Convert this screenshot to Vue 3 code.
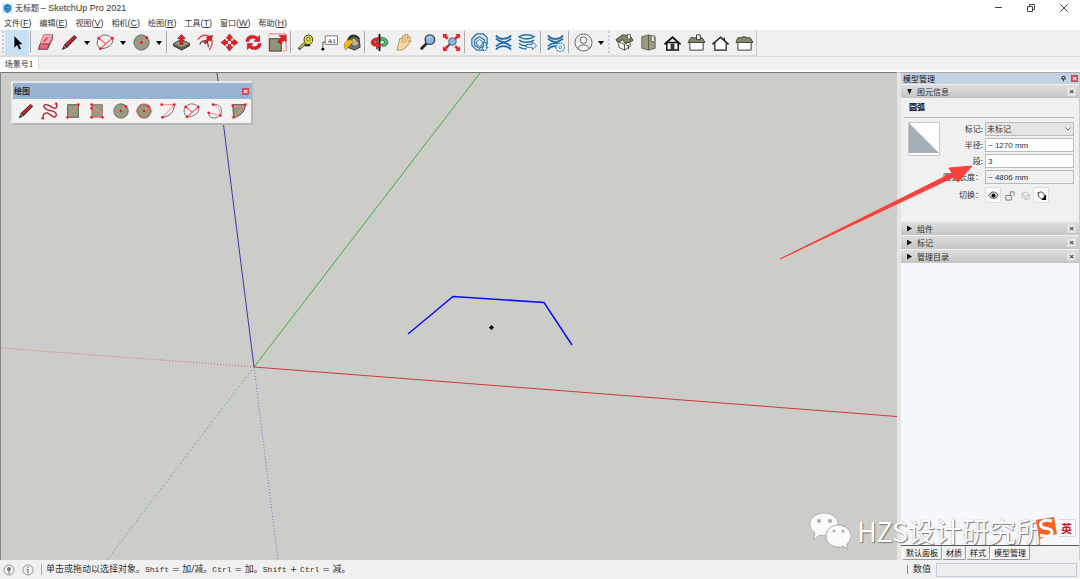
<script setup>
import { ref } from 'vue'

const menus = [
  ['文件', 'F'], ['编辑', 'E'], ['视图', 'V'], ['相机', 'C'],
  ['绘图', 'R'], ['工具', 'T'], ['窗口', 'W'], ['帮助', 'H'],
]

const dots = (...pts) => pts.map(([x, y]) => `<circle cx="${x}" cy="${y}" r="1.5" fill="#f01822"/>`).join('')
const pencil = '<path d="M2 18l2.500-6L15 2.200l3 2.600L7.500 15.500z" fill="#323232"/><path d="M5.500 12L15.500 2.800l1.500 1.500L7.500 14z" fill="#d3202a"/><path d="M2 18l2.500-5.500 2.500 2.600z" fill="#4c3a2c"/><path d="M4 13.500l2.500 2" stroke="#d9c4a0"/>'
const waves = '<path d="M2 2.500c4 5 12 5 16 0M2 6c5 4.500 11 4.500 16 0M2 14c5-4.500 11-4.500 16 0M2 17.500c4-5 12-5 16 0" fill="none" stroke="#1d6cab" stroke-width="1.900"/>'

const icons = {
  select: '<path d="M6.500 3v13l3-3 2.200 4.500 2.300-1-2.200-4.300h4z" fill="#000" stroke="#fff" stroke-width=".4"/>',
  eraser: '<path d="M8 2h9.500L12 17H2.500z" fill="#ee7f91" stroke="#7c4852"/><path d="M8 2h9.500l-3.800 9H4.500z" fill="#f7a5b1"/><path d="M2.500 17l2-5.500h9.300L12 17z" fill="#e76b80" stroke="#7c4852"/><path d="M17.500 2v4.500L12 17" fill="none" stroke="#7c4852"/><path d="M8 9l4-4" stroke="#d7586c" stroke-width="2"/>',
  pencil,
  arc: '<path d="M3 5.500C6 1 13 1 17 5.500M3 5.500C0 9 1 14 4.500 16.500M17 5.500C20 11 12 17 4.500 16.500" fill="none" stroke="#666"/><path d="M3 5.500l7 5.500M4.500 16.500L17 5.500" fill="none" stroke="#ff5f67" stroke-width="1.300"/>' + dots([3, 5.5], [17, 5.5], [4.5, 16.5]),
  circle: '<circle cx="10" cy="10" r="8" fill="#9b9a83" stroke="#65645a"/><path d="M10 10l5.500-5" stroke="#ff8b88"/>' + dots([10, 10], [15.5, 5]),
  push: '<path d="M1.500 11L10 7l8.500 4v2.500L10 18l-8.500-4.500z" fill="#5d5c4e" stroke="#393932"/><path d="M2 11l8-3.500 8 3.500-8 4z" fill="#99987d"/><path d="M10 1.500L6 6h2.500v6h3V6H14z" fill="#ef1d26" stroke="#7e1519" stroke-width=".7"/>',
  offset: '<path d="M2 7C6 1 15 0 17 9c.5 4-2 7-3 9" fill="none" stroke="#f13d43" stroke-width="1.400"/><path d="M4 12c2-5 9-6 9 3" fill="none" stroke="#454545" stroke-width="1.300"/><path d="M8 10l4-4-1-1.500 6.500-2-2 6-1.500-1-4 4z" fill="#e91b24" stroke="#70171a" stroke-width=".6"/>',
  move: '<g fill="#ee1d25" stroke="#7d1619" stroke-width=".6"><path d="M10 1L6.500 5.500h2V8h3V5.500h2zM10 19l-3.500-4.500h2V12h3v2.500h2zM1 10l4.500-3.500v2H8v3H5.500v2zM19 10l-4.500-3.500v2H12v3h2.500v2z"/></g>',
  rotate: '<g fill="#e91d25" stroke="#861619" stroke-width=".5"><path d="M2 9C2 2 10 1 14.500 4.500l2-2V9h-6l2-2.500C9 4.500 5.500 6 5 9zM18 11c0 7-8 8-12.500 4.500l-2 2V11h6l-2 2.500c3.500 2 7 .5 7.500-2.500z"/></g>',
  scale: '<path d="M1 1h18v18" fill="none" stroke="#ff6970"/><path d="M1 1v18h18" fill="none" stroke="#f2a5a8"/><path d="M1.500 6H14v13H1.500z" fill="#94937c" stroke="#43433b"/><path d="M10 9l4-4-2.500-2.500H19V9l-2-1.500-4 4z" fill="#ed1c24" stroke="#77171b" stroke-width=".6"/>',
  tape: '<path d="M9 11L3 17" stroke="#333" stroke-width="3"/><path d="M9 11L4 16" stroke="#e4d43a" stroke-width="1.500"/><ellipse cx="13" cy="7" rx="5" ry="5.500" fill="#3c3b30"/><ellipse cx="13" cy="7" rx="4" ry="4.500" fill="#eddd27"/><circle cx="13" cy="6.500" r="2" fill="#d7d7d2" stroke="#746d29"/><path d="M9 13h6" stroke="#26251e" stroke-width="2"/>',
  text: '<path d="M5.500 3h13v9h-13z" fill="#fff" stroke="#777"/><path d="M3 17V9.500h2.500" fill="none" stroke="#555"/><circle cx="3" cy="17" r="1.500"/><text x="8" y="10" font-size="7" font-family="Liberation Serif,serif">A1</text>',
  paint: '<path d="M5 8c0-7 10-8 12-2l1 9-6 3-7-3z" fill="#77715c" stroke="#303027"/><path d="M6 7c2-5 9-4 11-1" fill="none" stroke="#272721" stroke-width="1.500"/><path d="M6 8l6-3 5 6-5 5z" fill="#b9b39a" stroke="#49483d"/><path d="M8 7c-9 1-7 9-5 11 3-2 3-6 8-8z" fill="#efb628" stroke="#98711b" stroke-width=".6"/><path d="M11 12l5 3-4 2z" fill="#3c82aa"/>',
  orbit: '<path d="M10 1v18" stroke="#111" stroke-width="2"/><path d="M9 5C-1 5-1 14 7 14v3l5-4-5-4.500v2.500c-4-1-2-3 2-3z" fill="#e8222b" stroke="#791d20" stroke-width=".7"/><path d="M11 4.500c9 0 10 7 5 9.500l-3 0-1-2.500c4 0 5-3-1-4z" fill="#4fb36f" stroke="#255c38" stroke-width=".7"/>',
  hand: '<path d="M3 18l2-7 1-5 3-1v-2l3-1 1-1 2 1-1 3 3-1 1 1-3 4 3-1-1 2-4 5-5 3z" fill="#f4d7a0" stroke="#a18358" stroke-width=".8"/><path d="M9 5l-1 5M12 3l-2 7M15 5l-4 6" fill="none" stroke="#b69565" stroke-width=".7"/>',
  zoom: '<path d="M9 11l-6 6" stroke="#282828" stroke-width="3"/><circle cx="12.500" cy="7" r="5" fill="#8fb8dc" stroke="#3e444b" stroke-width="1.500"/><path d="M10 6c1-2 3-2 4-2" stroke="#d4e9fa" fill="none"/>',
  extents: '<path d="M10 10l-7 7" stroke="#444" stroke-width="2"/><circle cx="11" cy="9" r="4" fill="#8fb9da" stroke="#4c5962"/><path d="M1 1h5L4.500 2.500 7 5 5 7 2.500 4.500 1 6zM19 1v5l-1.500-1.500L15 7l-2-2 2.500-2.500L14 1zM1 19v-5l1.500 1.500L5 13l2 2-2.500 2.500L6 19zM19 19h-5l1.500-1.500L13 15l2-2 2.500 2.500L19 14z" fill="#ef1d27"/>',
  warehouse: '<path d="M7 1h7l4 4v7l-4 6H7l-5-5V6z" fill="none" stroke="#216ea8" stroke-width="1.300"/><path d="M10 4l5 3v6l-5 3-5-3V7z" fill="none" stroke="#216ea8" stroke-width="1.300"/><path d="M10 7l3 2v3l-3 2-3-2V9z" fill="none" stroke="#216ea8"/><path d="M14 10h3v5h2l-3.500 4-3.500-4h2z" fill="#f5f9fb" stroke="#216ea8"/>',
  waves,
  layers: '<path d="M1 4c4-3 12-3 16 0-4 3-12 3-16 0zM1 7.500c4 3 12 3 16 0M1 11c4 3 9 3 12 1M1 14.500c3 2 6 2.500 8 2" fill="none" stroke="#216ea8" stroke-width="1.500"/><path d="M9 12h6V9.500l4.500 4-4.500 4V15H9z" fill="#fff" stroke="#216ea8"/>',
  gear: waves + '<circle cx="15" cy="15" r="4.500" fill="#f4f4f4" stroke="#4d8dbb" stroke-width="1.400" stroke-dasharray="2 1"/><circle cx="15" cy="15" r="1.500" fill="none" stroke="#4d8dbb"/>',
  user: '<circle cx="10" cy="10" r="9" fill="none" stroke="#5d6063"/><circle cx="10" cy="7.500" r="3.500" fill="none" stroke="#5d6063"/><path d="M4 17c0-6 12-6 12 0" fill="none" stroke="#5d6063"/>',
  iso: '<path d="M4 9l6 3v6l-6-3zM10 12l6-4v6l-6 4z" fill="#f8f8f5" stroke="#55554b"/><path d="M1 7l7-5 8 1 3 5-8 3-3-4-5 3z" fill="#85846d" stroke="#383830"/><path d="M13 1.500h3v5h-3z" fill="#fff" stroke="#555"/><path d="M12 13h2v4" fill="none" stroke="#333"/>',
  top: '<path d="M3 4l7-2 7 2v12l-7 2-7-2z" fill="#9c9b80" stroke="#626154"/><path d="M10 2v16" stroke="#5c5b4f"/><path d="M13 3h3v6h-3z" fill="#fff" stroke="#666"/>',
  front: '<path d="M4 10h12v8H4z" fill="#fff" stroke="#111" stroke-width="1.600"/><path d="M1.500 12L10 4.500 18.500 12" fill="none" stroke="#111" stroke-width="2"/><path d="M8 11h4v7H8z" fill="#333"/>',
  right: '<path d="M3 10h14v8H3z" fill="#fff" stroke="#333"/><path d="M4 5h12l3 5H1z" fill="#89876e" stroke="#44433a"/><path d="M10 2h4v5h-4z" fill="#fff" stroke="#333"/>',
  back: '<path d="M4 10v8h12v-8" fill="#fff" stroke="#222" stroke-width="1.300"/><path d="M1.500 12L10 4.500 18.500 12M14 5v3" fill="none" stroke="#222" stroke-width="1.500"/>',
  left: '<path d="M3 10h14v8H3z" fill="#fff" stroke="#333"/><path d="M3 5h5V4h3v1h5l3 5H1z" fill="#89876e" stroke="#44433a"/>',
  freehand: '<path d="M2 18c0-7 5-7 8-4s7 4 7 0-5-4-9-5-7-5-3-6 7 4 10 4 3-3 2-5" fill="none" stroke="#b01d2a" stroke-width="1.500"/>' + dots([2, 18], [17, 2]),
  rect: '<path d="M4 3h12v14H4z" fill="#99987f" stroke="#55554b"/><path d="M4 17L16 3" stroke="#ff8c8b"/>' + dots([4, 17], [16, 3]),
  rotrect: '<path d="M4 3h12v14H4z" fill="#99987f" stroke="#77766a"/><path d="M4 3v14h12M4 7c6 0 12 4 12 10" fill="none" stroke="#ff8a8a"/>' + dots([4, 3], [4, 17], [16, 17], [4, 7]),
  polygon: '<path d="M6 3h8l4 7-4 7H6l-4-7z" fill="#99987f" stroke="#55554b"/><circle cx="10" cy="10" r="8" fill="none" stroke="#f2696c"/><path d="M10 10l5-5" stroke="#ffaaa8"/>' + dots([10, 10], [15, 5]),
  arccenter: '<path d="M17 3c0 8-5 13-13 14" fill="none" stroke="#555"/><path d="M3 3h14L4 17" fill="none" stroke="#ff7078"/>' + dots([3, 3], [17, 3], [4, 17]),
  arc3: '<path d="M8 3c8-2 12 7 7 12S3 18 3 12" fill="none" stroke="#666"/><path d="M8 3c5 2 8 6 8 12L3 12" fill="none" stroke="#ff7a80"/>' + dots([8, 3], [16, 15], [3, 12]),
  pie: '<path d="M3 3h14c0 8-6 13-13 14z" fill="#99987f" stroke="#4d4d43"/><path d="M3 5h13L4 17" fill="none" stroke="#ff898b"/>' + dots([3, 4], [17, 3], [4, 17]),
}

const groups = [
  [['select', '选择']],
  [['eraser', '擦除'], ['pencil', '直线', 1], ['arc', '圆弧', 1], ['circle', '圆', 1]],
  [['push', '推拉'], ['offset', '偏移'], ['move', '移动'], ['rotate', '旋转'], ['scale', '缩放']],
  [['tape', '卷尺'], ['text', '文字'], ['paint', '材质']],
  [['orbit', '环绕观察'], ['hand', '平移'], ['zoom', '缩放视图'], ['extents', '充满视窗']],
  [['warehouse', '模型库'], ['waves', '扩展程序库'], ['layers', '布局']],
  [['gear', '扩展程序管理']],
  [['user', '账户', 1]],
  [['iso', '等轴'], ['top', '俯视'], ['front', '前视'], ['right', '右视'], ['back', '后视'], ['left', '左视']],
]

const drawTools = [
  ['pencil', '直线'], ['freehand', '手绘线'], ['rect', '矩形'], ['rotrect', '旋转矩形'], ['circle', '圆'],
  ['polygon', '多边形'], ['arccenter', '中心圆弧'], ['arc', '两点圆弧'], ['arc3', '三点圆弧'], ['pie', '扇形'],
]

const trays = ['组件', '标记', '管理目录']
const trayTabs = ['默认面板', '材质', '样式', '模型管理']
const radius = ref('~ 1270 mm')
const segments = ref('3')
const arcLength = ref('~ 4806 mm')
</script>

<template>
  <div class="app">
    <header class="titlebar">
      <svg class="logo" viewBox="0 0 12 12"><rect width="12" height="12" fill="#d8ecf8" /><path d="M6 1l4 2v5l-4 3-4-3V3z" fill="#1d76ae" /><path d="M3 4l3 1 3-1M3 7l3 1 3-1" fill="none" stroke="#74b7db" /></svg>
      <h1>无标题 <span class="latin">– SketchUp Pro 2021</span></h1>
      <div class="win">
        <button aria-label="最小化"><svg viewBox="0 0 10 10"><path d="M2 4.500h7" /></svg></button>
        <button aria-label="还原"><svg viewBox="0 0 10 10"><path d="M1.500 3.500h5v5h-5zM3.500 3.500v-2h5v5h-2" /></svg></button>
        <button aria-label="关闭"><svg viewBox="0 0 10 10"><path d="M1.500 1.500l7 7M8.500 1.500l-7 7" /></svg></button>
      </div>
    </header>

    <nav class="menubar">
      <button v-for="m in menus" :key="m[1]">{{ m[0] }}<span class="latin">(<u>{{ m[1] }}</u>)</span></button>
    </nav>

    <div class="toolbar">
      <div v-for="(g, gi) in groups" :key="gi" class="group" :class="{ first: gi === 0, grip: gi === 8 }">
        <template v-for="t in g" :key="t[0]">
          <button class="tool" :class="{ active: t[0] === 'select', slim: t[0] === 'paint' }" :aria-label="t[1]">
            <svg viewBox="0 0 20 20" v-html="icons[t[0]]"></svg>
          </button>
          <button v-if="t[2]" class="drop" :aria-label="t[1] + '选项'"><svg viewBox="0 0 6 4"><path d="M0 0h6L3 4z" /></svg></button>
        </template>
      </div>
    </div>

    <div class="scenes"><button>场景号1</button></div>

    <main class="work">
      <section class="view">
        <svg class="scene" viewBox="0 0 896 487" preserveAspectRatio="xMinYMin slice">
          <g fill="none">
            <path d="M253 294L479 0" stroke="#35b535" />
            <path d="M253 294L216 0" stroke="#3b3bb2" />
            <path d="M253 294l643 49.500" stroke="#cb3a3a" />
            <path d="M253 294L0 275" stroke="#d8655f" stroke-dasharray="1 2" />
            <path d="M253 294L106 487" stroke="#70b98d" stroke-dasharray="2 2" />
            <path d="M253 294l24 193" stroke="#7676c5" stroke-dasharray="1 2" />
            <path d="M407 261l45-37.500 91 6L571 272" stroke="#0d0df5" stroke-width="1.500" />
          </g>
          <path d="M490.500 252l2.500 2.500-2.500 2.500-2.500-2.500z" />
        </svg>
        <div class="palette">
          <div class="palette-head"><span>绘图</span><button class="red" aria-label="关闭绘图">×</button></div>
          <div class="palette-tools">
            <button v-for="d in drawTools" :key="d[0]" :aria-label="d[1]"><svg viewBox="0 0 20 20" v-html="icons[d[0]]"></svg></button>
          </div>
        </div>
      </section>

      <aside class="tray">
        <div class="tray-head">
          <span>模型管理</span>
          <button class="pin" aria-label="固定"><svg viewBox="0 0 6 8"><path d="M1.500 4.500v-3h3v3M0 4.500h6M3 4.500v3" fill="none" stroke="#222" /></svg></button>
          <button class="red" aria-label="关闭面板">×</button>
        </div>
        <div class="bar"><i class="open"></i><span>图元信息</span><button aria-label="关闭图元信息">×</button></div>
        <div class="entity">
          <h2>圆弧</h2>
          <div class="info">
            <svg class="swatch" viewBox="0 0 32 34"><path d="M.5.5h31v33H.5z" fill="#fff" stroke="#c7c7c7" /><path d="M1 1l30 30H1z" fill="#a4b0b8" /></svg>
            <div class="fields">
              <label for="tag">标记:</label>
              <div class="pick">
                <select id="tag"><option>未标记</option></select>
                <svg viewBox="0 0 6 4"><path d="M.5.5L3 3 5.500.5" fill="none" stroke="#777" /></svg>
              </div>
              <label for="radius">半径:</label>
              <input id="radius" v-model="radius">
              <label for="segments">段:</label>
              <input id="segments" v-model="segments">
              <label for="length">圆弧长度：</label>
              <input id="length" v-model="arcLength" readonly class="locked">
              <span class="name">切换：</span>
              <div class="toggles">
                <button class="on" aria-label="可见"><svg viewBox="0 0 12 12"><path d="M1 6c3-5 7-5 10 0-3 4-7 4-10 0z" fill="#fff" stroke="#222" /><circle cx="6" cy="6" r="2.300" /></svg></button>
                <button aria-label="锁定"><svg viewBox="0 0 12 12"><path d="M2 6h6v5H2zM7 6V2h4v4" fill="none" stroke="#777" /></svg></button>
                <button aria-label="接收阴影"><svg viewBox="0 0 12 12"><path d="M2 4l4-2 4 3v4l-3 2-4-3zM2 4l4 3 4-2M6 7l1 4" fill="none" stroke="#bbb" /></svg></button>
                <button class="on" aria-label="投射阴影"><svg viewBox="0 0 12 12"><path d="M6 9l5-4v6H7z" /><path d="M2 3l4-1 3 3v3L6 10 3 7z" fill="#fff" stroke="#333" /></svg></button>
              </div>
            </div>
          </div>
        </div>
        <div v-for="t in trays" :key="t" class="bar"><i></i><span>{{ t }}</span><button :aria-label="'关闭' + t">×</button></div>
        <div class="blank"></div>
        <div class="tabs"><button v-for="t in trayTabs" :key="t" :class="{ current: t === '模型管理' }">{{ t }}</button></div>
      </aside>

      <svg class="pointer" viewBox="0 0 194 98"><path d="M0 97l172-86-3-5 23-2-14 16-4-5z" fill="#f8423e" stroke="#f8423e" /></svg>
    </main>

    <footer class="status">
      <div class="hint">
        <svg viewBox="0 0 12 12"><circle cx="6" cy="6" r="5" fill="none" stroke="#999" /><circle cx="6" cy="5" r="2" fill="#777" /><path d="M6 5v5" stroke="#777" /></svg>
        <svg viewBox="0 0 12 12"><circle cx="6" cy="6" r="5" fill="none" stroke="#999" /><path d="M6 2.500v1.500M6 5v4.500M4.500 5.500H6" stroke="#666" /></svg>
        <p>单击或拖动以选择对象。<kbd>Shift</kbd> = 加/减。<kbd>Ctrl</kbd> = 加。<kbd>Shift</kbd> + <kbd>Ctrl</kbd> = 减。</p>
      </div>
      <div class="measure"><label for="value">数值</label><input id="value"></div>
    </footer>

    <div class="mark">
      <svg viewBox="0 0 42 38">
        <path d="M15 1C7 1 1 6 1 12c0 4 2 7 5 9l-1 6 6-4c10 2 18-3 18-11C29 6 23 1 15 1z" fill="#fafafa" stroke="#aaa" stroke-width=".8" />
        <path d="M29 13c-7 0-12 5-12 11s5 11 12 11c2 0 3 0 5-1l5 3-1-5c2-2 4-5 4-8 0-6-6-11-13-11z" fill="#fafafa" stroke="#999" stroke-width=".8" />
        <g fill="#aaa"><circle cx="10" cy="9" r="2" /><circle cx="21" cy="9" r="2" /><circle cx="25" cy="19" r="1.500" /><circle cx="34" cy="19" r="1.500" /></g>
      </svg>
      <span>HZS设计研究所</span>
    </div>
    <div class="ime">
      <svg viewBox="0 0 24 24"><path d="M2 4l18-3 3 17-18 5z" fill="#f26526" /><path d="M18 5C10 3 5 6 7 10s11 1 11 6-7 5-12 3" fill="none" stroke="#fff" stroke-width="3" /></svg>
      <button>英</button>
    </div>
  </div>
</template>

<style>
body { margin: 0; }
</style>

<style scoped>
.app {
  position: relative;
  display: flex;
  flex-direction: column;
  min-height: 100vh;
  background: #f0f0f0;
  color: #333;
  font: 8px/12px "Noto Sans CJK SC", sans-serif;
}
* { box-sizing: border-box; }
button { margin: 0; padding: 0; border: 0; background: none; color: inherit; font: inherit; }
svg { display: block; flex: none; }
input, select { min-width: 0; margin: 0; font: inherit; color: inherit; border-radius: 0; }
.latin { font-family: "Liberation Sans", sans-serif; font-size: 9px; }

.titlebar { display: flex; align-items: center; height: 16px; padding-left: 2px; gap: 2px; background: #fff; }
.logo { width: 11px; height: 11px; }
h1 { margin: 0; font: inherit; flex: 1; }
.win { display: flex; }
.win button { width: 33px; display: flex; justify-content: center; }
.win svg { width: 10px; height: 10px; fill: none; stroke: #444; }

.menubar { display: flex; align-items: center; gap: 8px; height: 14px; padding-left: 4px; background: #fff; }

.toolbar {
  display: flex;
  align-self: flex-start;
  height: 26px;
  padding-left: 1px;
  border-right: 1px solid #c8c8c8;
  border-bottom: 1px solid #ddd;
}
.group { display: flex; align-items: center; padding-left: 4px; position: relative; }
.group::before { content: ""; position: absolute; left: 1px; top: 1px; bottom: 2px; border-left: 1px solid #aaa; }
.group.grip { padding-left: 5px; }
.group.first::before, .group.grip::before { border-left: 2px dotted #ccc; }
.tool { width: 24px; height: 25px; display: flex; align-items: center; justify-content: center; }
.tool.slim { width: 22px; }
.tool.active { background: #c7e2f7; }
.tool svg { width: 19px; height: 19px; }
.drop { width: 12px; display: flex; justify-content: center; }
.drop svg { width: 6px; height: 4px; }

.scenes { height: 16px; border-top: 1px solid #ddd; border-bottom: 2px solid #fff; }
.scenes button { display: block; width: 39px; height: 13px; background: #fff; border-right: 1px solid #ddd; }

.work { position: relative; display: flex; flex: 1; min-height: 487px; }
.view { position: relative; flex: 1; border-top: 1px solid #777; border-left: 1px solid #888; background: #cccdc8; overflow: hidden; }
.scene { position: absolute; inset: 0; width: 100%; height: 100%; }
.palette { position: absolute; left: 10px; top: 8px; width: 242px; border: 2px solid #e5e8eb; border-right-color: #b4b8bc; border-bottom-color: #b4b8bc; background: #f3f3f3; }
.palette-head { display: flex; align-items: center; justify-content: space-between; height: 16px; padding: 0 2px 0 1px; background: #98b4d2; font-size: 8px; font-weight: 500; color: #111; }
.red { width: 7px; height: 7px; background: #ca4f54; color: #fff; font: bold 8px/7px "Liberation Sans", sans-serif; }
.palette-tools { display: flex; justify-content: space-between; align-items: center; height: 24px; padding: 0 3px 0 4px; }
.palette-tools svg { width: 18px; height: 18px; }

.tray { display: flex; flex-direction: column; width: 183px; border-left: 4px solid #e5e5e5; border-right: 1px solid #ccc; border-top: 1px solid #aaa; background: #f0f0f0; }
.tray-head { display: flex; align-items: center; gap: 5px; height: 11px; padding: 0 1px 0 2px; background: #c3d2e3; color: #111; }
.tray-head span { flex: 1; line-height: 11px; }
.pin svg { width: 5px; height: 7px; }
.bar { display: flex; align-items: center; height: 13px; margin-top: 1px; padding: 0 3px 0 6px; background: linear-gradient(#dedede, #c5c5c5); }
.bar span { flex: 1; padding-left: 5px; }
.bar button { width: 9px; height: 9px; border: 1px solid #ddd; background: #e8e8e8; font: bold 8px/7px "Liberation Sans", sans-serif; }
.bar i { width: 5px; height: 6px; background: #111; clip-path: polygon(0 0, 100% 50%, 0 100%); }
.bar i.open { clip-path: polygon(0 0, 100% 0, 50% 100%); }
.entity { padding: 0 5px 17px 3px; }
h2 { margin: 0 0 4px; padding: 3px 5px 4px; border-bottom: 1px solid #bbb; font-size: 8px; line-height: 12px; color: #000; }
.info { display: flex; padding-left: 4px; }
.swatch { width: 32px; height: 34px; }
.fields { flex: 1; min-width: 0; display: grid; grid-template-columns: 1fr 89px; column-gap: 2px; row-gap: 2px; align-items: center; }
label, .name { text-align: right; white-space: nowrap; }
.fields input, .fields select { display: block; width: 100%; height: 14px; padding: 0 2px; border: 1px solid #b8bcc0; background: #fff; line-height: 12px; }
.fields input { font-family: "Liberation Sans", sans-serif; color: #234; }
.pick { position: relative; }
.fields select { appearance: none; padding-left: 1px; background: #e5e5e5; }
.pick svg { position: absolute; right: 3px; top: 5px; width: 6px; height: 4px; pointer-events: none; }
.fields input.locked { background: #efefef; }
.toggles { display: flex; height: 18px; align-items: center; }
.toggles button { width: 16px; height: 16px; display: flex; align-items: center; justify-content: center; }
.toggles .on { background: #f8f9fa; border: 1px solid #ddd; }
.toggles svg { width: 11px; height: 11px; }
.blank { flex: 1; background: #f4f7fc; }
.tabs { display: flex; height: 15px; padding-left: 1px; border-top: 1px solid #555; }
.tabs button { padding: 0 3px; border: 1px solid #999; border-top: 0; border-left-color: #fff; border-radius: 0 0 2px 2px; color: #111; }
.tabs .current { background: #f8f8f8; }
.pointer { position: absolute; right: 106px; top: 90px; width: 194px; height: 98px; }

.status { display: flex; align-items: center; height: 19px; font-size: 9px; font-family: "DejaVu Sans", "Noto Sans CJK SC", sans-serif; }
.hint { flex: 1; display: flex; align-items: center; padding-left: 3px; gap: 7px; }
.hint svg { width: 12px; height: 12px; }
.hint p { margin: 0; padding-left: 4px; border-left: 1px solid #aaa; line-height: 11px; }
kbd { font: 8px/11px "Liberation Mono", monospace; }
.measure { display: flex; align-items: center; gap: 5px; width: 173px; padding-right: 3px; }
.measure label { padding-left: 5px; border-left: 1px solid #888; line-height: 9px; }
.measure input { flex: 1; height: 14px; border: 1px solid #bdccdb; background: #ededed; }

.mark { position: absolute; right: 37px; bottom: 29px; display: flex; align-items: center; gap: 6px; color: #fff; font-size: 27px; line-height: 38px; text-shadow: 1px 1px 1px #777, 0 0 1px #999; pointer-events: none; }
.mark svg { width: 42px; height: 38px; }
.ime { position: absolute; right: 4px; bottom: 39px; display: flex; align-items: center; }
.ime svg { width: 24px; height: 24px; }
.ime button { width: 18px; height: 18px; background: #f8faff; border: 1px solid #d3dbe8; border-left: 0; color: #c2202a; font-weight: 700; font-size: 11px; line-height: 16px; }
</style>
